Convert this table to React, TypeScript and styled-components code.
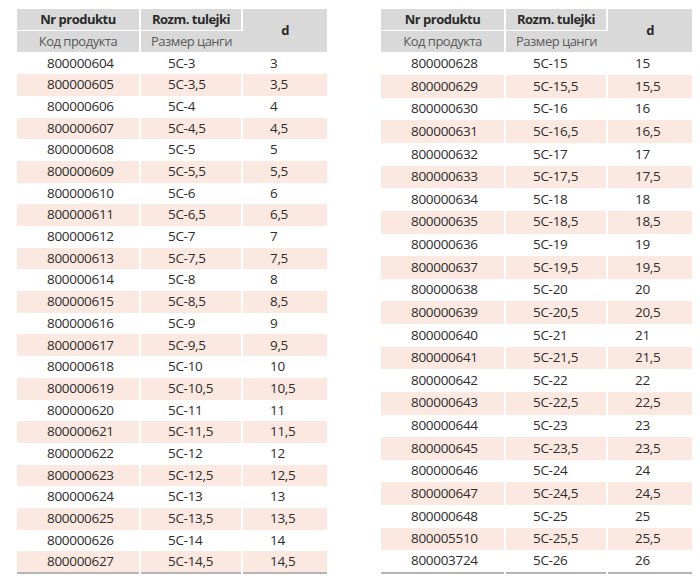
import styled, { createGlobalStyle } from "styled-components";

const GlobalStyle = createGlobalStyle`
  html, body {
    margin: 0;
    padding: 0;
    background: #ffffff;
  }
  body {
    font-family: "Open Sans", "Noto Sans", "Noto Sans CJK SC", sans-serif;
    color: #2d2d2d;
  }
`;

type Row = { code: string; size: string; d: string };

const makeRows = (codes: string[], start: number): Row[] =>
  codes.map((code, i) => {
    const v = start + i * 0.5;
    const d = Number.isInteger(v) ? String(v) : String(v).replace(".", ",");
    return { code, size: `5C-${d}`, d };
  });

const leftCodes = Array.from({ length: 24 }, (_, i) => String(800000604 + i));
const rightCodes = [
  ...Array.from({ length: 21 }, (_, i) => String(800000628 + i)),
  "800005510",
  "800003724",
];

const leftRows = makeRows(leftCodes, 3);
const rightRows = makeRows(rightCodes, 15);

const Page = styled.div`
  display: flex;
  padding: 9px 8px 0 17px;
  gap: 54px;
  width: 700px;
  box-sizing: border-box;
`;

const Table = styled.table<{ $w: number }>`
  width: ${(p) => p.$w}px;
  border-collapse: collapse;
  table-layout: fixed;
  border-bottom: 2px solid #b4b4b4;
  font-size: 13.5px;
`;

const HeadCell = styled.th<{ $sub?: boolean }>`
  background: #d9d9d9;
  height: 21px;
  padding: 0;
  text-align: center;
  font-size: 13px;
  letter-spacing: -0.5px;
  font-weight: ${(p) => (p.$sub ? 400 : 700)};
  color: ${(p) => (p.$sub ? "#5a5a5a" : "#2a2a2a")};
  border-right: 2px solid #fff;
  border-bottom: 1px solid #fff;
  line-height: 1;
  &:last-child {
    border-right: 0;
  }
`;

const DRow = styled.tr<{ $alt: boolean; $h: number }>`
  background: ${(p) => (p.$alt ? "#fbe9e1" : "#ffffff")};
  height: ${(p) => p.$h}px;
`;

const Cell = styled.td<{ $pad: number }>`
  padding: 0 0 0 ${(p) => p.$pad}px;
  text-align: left;
  white-space: nowrap;
  letter-spacing: -0.3px;
  border-right: 2px solid #fff;
  line-height: 1;
  &:last-child {
    border-right: 0;
  }
`;

type TableProps = { rows: Row[]; widths: number[]; rowH: number; pads: number[] };

const SizeTable = ({ rows, widths, rowH, pads }: TableProps) => (
  <Table $w={widths.reduce((a, b) => a + b, 0)}>
    <colgroup>
      {widths.map((w, i) => (
        <col key={i} style={{ width: w }} />
      ))}
    </colgroup>
    <thead>
      <tr>
        <HeadCell>Nr produktu</HeadCell>
        <HeadCell>Rozm. tulejki</HeadCell>
        <HeadCell rowSpan={2}>d</HeadCell>
      </tr>
      <tr>
        <HeadCell $sub>Код продукта</HeadCell>
        <HeadCell $sub>Размер цанги</HeadCell>
      </tr>
    </thead>
    <tbody>
      {rows.map((r, i) => (
        <DRow key={r.code} $alt={i % 2 === 1} $h={rowH}>
          <Cell $pad={pads[0]}>{r.code}</Cell>
          <Cell $pad={pads[1]}>{r.size}</Cell>
          <Cell $pad={pads[2]}>{r.d}</Cell>
        </DRow>
      ))}
    </tbody>
  </Table>
);

export default function App() {
  return (
    <>
      <GlobalStyle />
      <Page>
        <SizeTable rows={leftRows} widths={[123, 102, 85]} rowH={21.7} pads={[30, 27, 27]} />
        <SizeTable rows={rightRows} widths={[124, 102, 85]} rowH={22.6} pads={[30, 27, 27]} />
      </Page>
    </>
  );
}
